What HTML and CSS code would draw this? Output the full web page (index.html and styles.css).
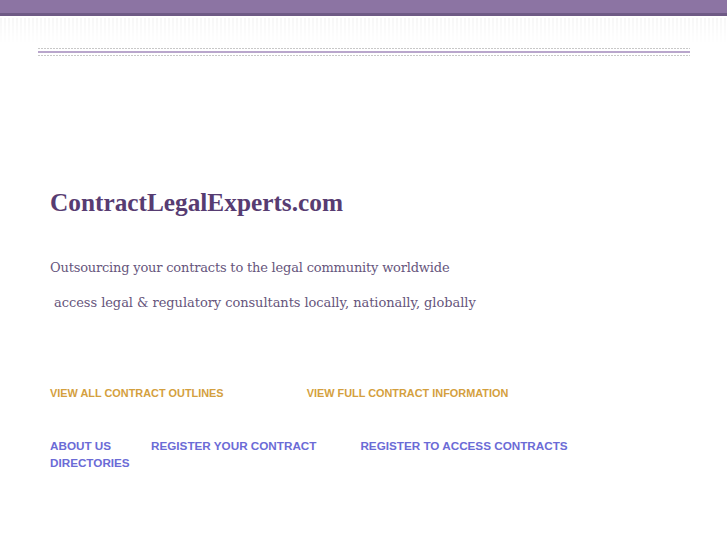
FILE: index.html
```html
<html>
  <head>
    <link rel="stylesheet" href="styles.css">
  </head>
  <body>
    <div class="topbar"></div>
    <div class="topshade"></div>
    <div class="rule">
      <div class="dots"></div>
      <div class="line"></div>
      <div class="dots"></div>
    </div>

    <div class="content">
      <div class="headline">ContractLegalExperts.com</div>
      <div class="tagline">Outsourcing your contracts to the legal community worldwide</div>
      <div class="tagline second">&nbsp;access legal &amp; regulatory consultants locally, nationally, globally</div>

      <div class="links gold">
        <a href="#">VIEW ALL CONTRACT OUTLINES</a>
        <a href="#">VIEW FULL CONTRACT INFORMATION</a>
      </div>

      <div class="links blue">
        <a href="#" class="about">ABOUT US</a>
        <a href="#" class="reg">REGISTER YOUR CONTRACT</a>
        <a href="#">REGISTER TO ACCESS CONTRACTS</a>
        <a href="#">DIRECTORIES</a>
      </div>
    </div>
  </body>
</html>
```

FILE: styles.css
```css
body { margin:0px; background:#ffffff; font-family:"Liberation Serif", serif; }

.topbar { height:13px; background:#8c74a3; border-bottom:3px solid #6e5a85; }
.topshade { height:24px; margin-top:2px;
            background-image:repeating-linear-gradient(90deg, #f7f7f7 0px, #f7f7f7 2px, #ffffff 2px, #ffffff 4px);
            -webkit-mask-image:linear-gradient(#000000, rgba(0,0,0,.1)); }

.rule { margin:6px 37px 0px 38px; }
.rule .dots { height:1px; background-image:repeating-linear-gradient(90deg, #c8c8c8 0px, #c8c8c8 2px, #ffffff 2px, #ffffff 3px); }
.rule .line { height:2px; margin:2px 0px; background:#b9a6cc; }

.content { padding-left:50px; padding-top:130px; }

.headline { font-family:"Liberation Serif", serif; font-weight:bold; font-size:25.3px; color:#573c72; line-height:32px; }

.tagline { font-family:"DejaVu Serif", serif; font-size:13px; letter-spacing:-0.19px; color:#66557c; margin-top:41px; line-height:18px; }
.tagline.second { margin-top:17px; letter-spacing:-0.06px; }

.links { font-family:"Liberation Sans", Arial, sans-serif; font-weight:bold; line-height:17px; display:flex; flex-wrap:wrap; }
.links a { text-decoration:none; }
.links.gold { font-size:10.9px; margin-top:73px; column-gap:83px; }
.links.gold a { color:#d4a03e; }
.links.blue { font-size:11.7px; margin-top:35px; width:560px; }
.links.blue a { color:#6b6bd6; }
.links.blue .about { margin-right:40px; }
.links.blue .reg { margin-right:44px; }
```
